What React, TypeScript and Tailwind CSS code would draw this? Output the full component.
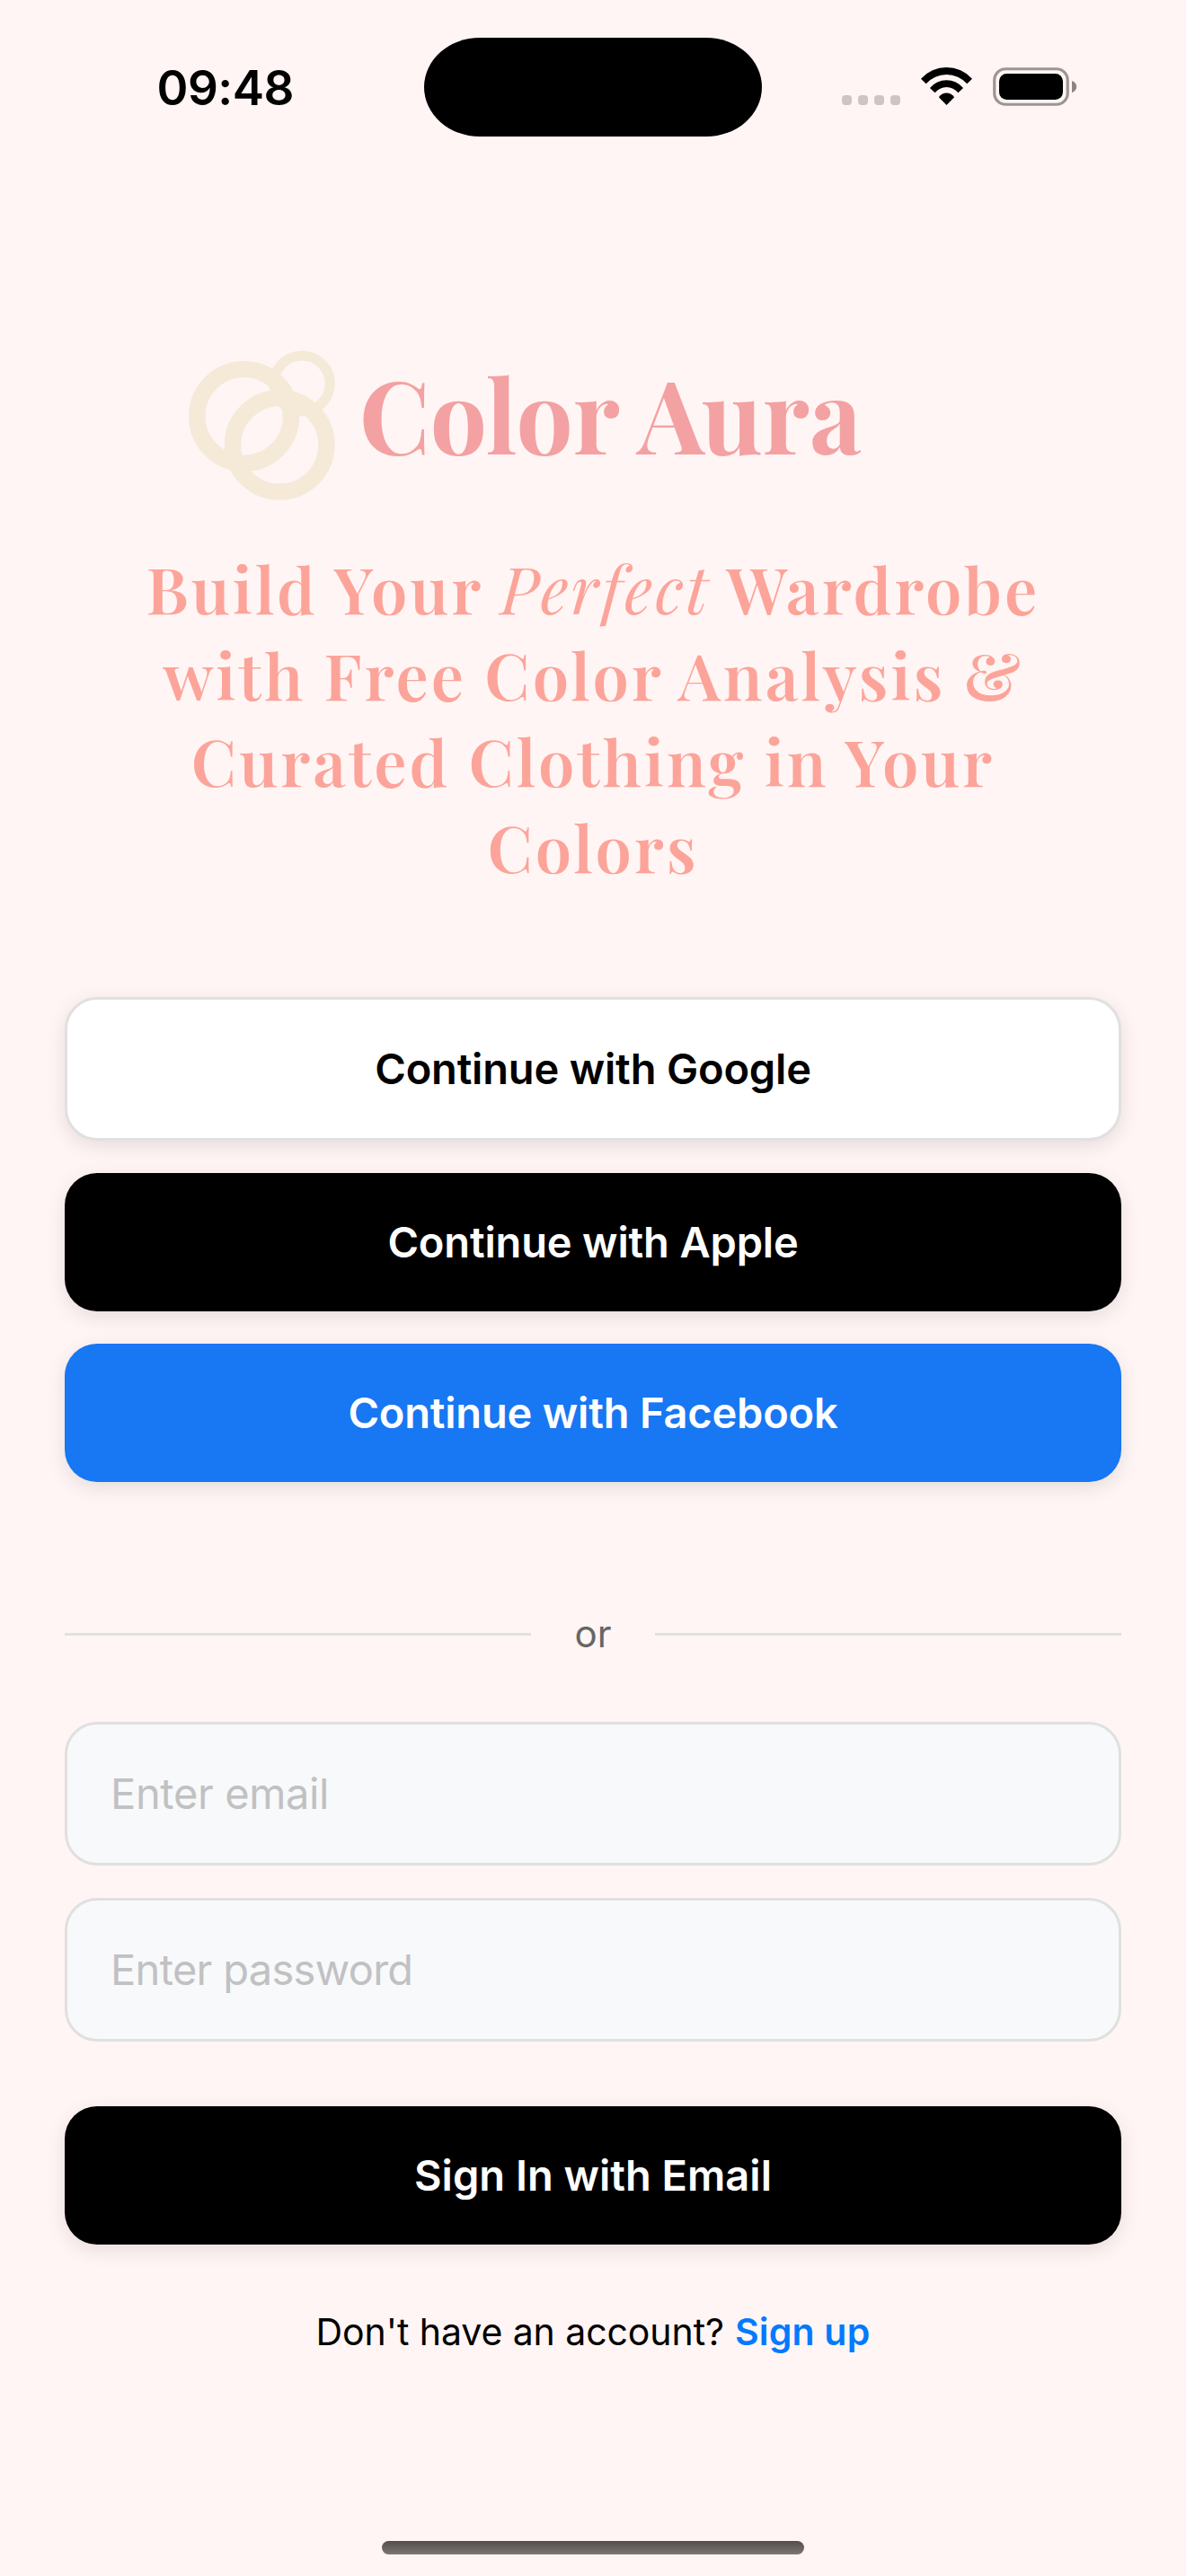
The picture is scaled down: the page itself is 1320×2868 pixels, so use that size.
import React from 'react';

function StatusBar() {
  return (
    <header className="flex h-[177px] items-start">
      <div className="w-[472px] pt-[68px] pl-[174.5px] text-[53px] leading-[60px] font-semibold tracking-[-0.5px]">
        09:48
      </div>
      <div className="mt-[42px] h-[110px] w-[376px] rounded-[62px/55px] bg-black" />
      <div className="flex pt-[75px] pl-[89px]">
        <div className="mt-[31px] flex gap-[7px]">
          {[0, 1, 2, 3].map((i) => (
            <span key={i} className="size-[11px] rounded-[4px] bg-[#cec4c4]" />
          ))}
        </div>
        <svg className="ml-[23px] h-[42px] w-[57px]" viewBox="375 75 172 126">
          <path d="M375 113A116 116 0 0 1 547 113L530 130A92 92 0 0 0 392 130Z" />
          <path d="M405 144A73 73 0 0 1 517 144L500 160A50 50 0 0 0 422 160Z" />
          <path d="M435 175A31 31 0 0 1 487 175L461 201Z" />
        </svg>
        <svg className="ml-[23px] h-[43px] w-[94px]" viewBox="0 0 94 43">
          <rect x="1.75" y="1.75" width="81.5" height="39.5" rx="12.5" fill="none" stroke="#9d9594" strokeWidth="3.2" />
          <rect x="7" y="7" width="71" height="29" rx="8.5" />
          <path d="M88 15C91.2 16 93.2 18.6 93.2 21.6S91.2 27.2 88 28.3Z" fill="#8b8584" />
        </svg>
      </div>
    </header>
  );
}

function Logo() {
  return (
    <svg className="h-[167px] w-[163px]" viewBox="210 390 163 167" fill="none" stroke="#f5e9d8">
      <circle cx="271.6" cy="463.5" r="52.4" strokeWidth="18.4" />
      <circle cx="311.2" cy="495.4" r="52.3" strokeWidth="18.3" />
      <circle cx="336.1" cy="427" r="31.1" strokeWidth="11" />
    </svg>
  );
}

const buttonBase =
  'flex w-full items-center justify-center rounded-[36px] text-[47px] font-semibold shadow-[0_6px_22px_rgba(0,0,0,0.1)]';

const inputBase =
  "block h-[160px] w-full rounded-[36px] border-[3px] border-[#e0e0e0] bg-[#f8f9fb] px-12 pb-[2px] text-[47px] outline-none placeholder:text-[#c1c1c2] placeholder:opacity-100";

export default function App() {
  return (
    <div className="flex h-[2868px] w-[1320px] flex-col overflow-hidden bg-[#fff5f4] font-['Inter',sans-serif] text-black">
      <StatusBar />

      <div className="mt-[213px] flex items-start pl-[210px]">
        <Logo />
        <h1 className="pl-[26.7px] font-['Playfair_Display','Liberation_Serif',serif] text-[112px] leading-[140px] font-bold whitespace-nowrap text-[#f3a1a2] [text-rendering:optimizeLegibility]">
          Color Aura
        </h1>
      </div>

      <h2 className="mt-[49px] text-center font-['Playfair_Display','Liberation_Serif',serif] text-[72px] leading-[96px] font-semibold tracking-[3px] text-[#fca49a] [text-rendering:optimizeLegibility]">
        Build Your <em className="font-normal">Perfect</em> Wardrobe
        <br />
        with Free Color Analysis &amp;
        <br />
        Curated Clothing in Your
        <br />
        Colors
      </h2>

      <main className="mt-[120px] px-[72px]">
        <div className="flex flex-col gap-9">
          <button className={`${buttonBase} h-[160px] border-[3px] border-[#e0e0e0] bg-white tracking-[-0.17px]`}>
            Continue with Google
          </button>
          <button className={`${buttonBase} h-[154px] bg-black tracking-[-0.15px] text-white`}>
            Continue with Apple
          </button>
          <button className={`${buttonBase} h-[154px] bg-[#1877f2] tracking-[-0.19px] text-white`}>
            Continue with Facebook
          </button>
        </div>

        <div className="mt-[140px] flex h-[59px] items-center">
          <div className="h-[3px] flex-1 bg-[#e0e0e0]" />
          <span className="w-[138px] pb-[2px] text-center text-[42px] leading-[57px] text-[#666666]">or</span>
          <div className="h-[3px] flex-1 bg-[#e0e0e0]" />
        </div>

        <div className="mt-[68px] flex flex-col gap-9">
          <input type="email" placeholder="Enter email" className={`${inputBase} tracking-[-0.35px]`} />
          <input type="password" placeholder="Enter password" className={`${inputBase} tracking-[-0.68px]`} />
        </div>

        <button className={`${buttonBase} mt-[72px] h-[154px] bg-black text-white`}>Sign In with Email</button>

        <p className="mt-[72px] flex justify-center text-[41px] leading-[50px]">
          <span className="tracking-[-0.08px]">Don&apos;t have an account?</span>
          <a className="ml-[12px] font-semibold tracking-[0.2px] text-[#007aff]">Sign up</a>
        </p>
      </main>

      <div className="mx-auto mt-auto mb-6 h-[15px] w-[470px] rounded-full bg-linear-to-b from-[#534d4c] to-[#7d7675]" />
    </div>
  );
}
